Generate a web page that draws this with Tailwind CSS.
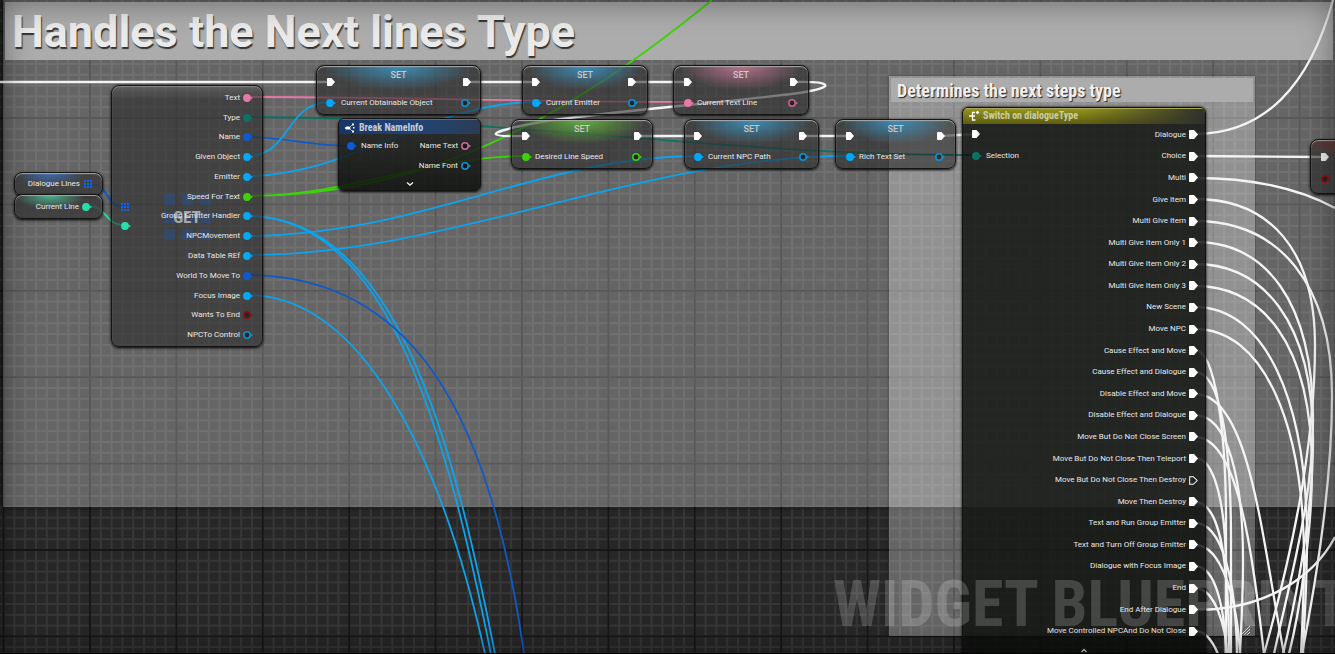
<!DOCTYPE html>
<html lang="en">
<head>
<meta charset="utf-8">
<title>Widget Blueprint</title>
<script src="https://cdn.jsdelivr.net/npm/@tailwindcss/browser@4"></script>
</head>
<body class="bg-[#272727]">
<svg class="hidden" aria-hidden="true">
  <symbol id="exec" viewBox="0 0 8 8"><path d="M0 0.7Q0 0 .7 0H4.500L8 4 4.500 8H.7Q0 8 0 7.3Z" fill="currentColor"/></symbol>
  <symbol id="exec-open" viewBox="0 0 8 8"><path d="M.6.6H3.8L7.3 4 3.8 7.4H.6Z" fill="none" stroke="currentColor" stroke-width=".9"/></symbol>
  <symbol id="pin" viewBox="0 0 10 8"><circle cx="4" cy="4" r="3.9" fill="currentColor"/><path d="M7.6 2.4 10 4 7.6 5.6Z" fill="currentColor"/></symbol>
  <symbol id="pin-open" viewBox="0 0 10 8"><circle cx="4" cy="4" r="3.200" fill="#111" fill-opacity=".6" stroke="currentColor" stroke-width="1.500"/><path d="M7.8 2.4 10 4 7.8 5.6Z" fill="currentColor"/></symbol>
  <symbol id="array" viewBox="0 0 8 8"><path d="M0 0h2v2H0zM3 0h2v2H3zM6 0h2v2H6zM0 3h2v2H0zM3 3h2v2H3zM6 3h2v2H6zM0 6h2v2H0zM3 6h2v2H3zM6 6h2v2H6z" fill="currentColor"/></symbol>
</svg>
<main class="relative h-screen w-full overflow-hidden font-['Roboto',sans-serif] text-[8px] leading-none text-[#e8e8e8]">
  <!-- Grid -->
  <svg class="absolute inset-0 size-full" aria-hidden="true">
    <defs>
      <pattern id="minor" width="10.8" height="10.8" patternUnits="userSpaceOnUse" x="2.6" y="30.6"><path d="M0 1H10.8M1 0V10.8" stroke="#363636" stroke-width="2"/></pattern>
      <pattern id="major" width="86.4" height="86.4" patternUnits="userSpaceOnUse" x="2.6" y="30.6"><path d="M0 1H86.4M1 0V86.4" stroke="#161616" stroke-width="2"/></pattern>
    </defs>
    <rect width="100%" height="100%" fill="url(#minor)"/><rect width="100%" height="100%" fill="url(#major)"/>
  </svg>

  <!-- Comment boxes -->
  <section class="absolute left-[3px] right-0 top-0 h-[507px] bg-white/29 px-0.5 pt-0.5 shadow-[0_0_5px_rgba(0,0,0,0.8)]">
    <h1 class="flex h-[58px] items-center bg-[#acacac] pl-[7px] text-[45px] font-bold text-[#eaeaea] [text-shadow:1px_2px_1px_#333]">Handles the Next lines Type</h1>
  </section>
  <section class="absolute left-[889px] top-[76px] h-[560px] w-[366px] bg-white/29 p-0.5 shadow-[0_0_3px_rgba(0,0,0,0.5)]">
    <h2 class="flex h-6 items-center bg-[#acacac] pl-1.5 pt-0.5 font-['Roboto_Condensed','Roboto',sans-serif] text-[18px] font-bold text-[#f0f0f0] [text-shadow:1px_1px_1px_#222]">Determines the next steps type</h2>
    <svg class="absolute bottom-0 right-1 size-3" viewBox="0 0 12 12" stroke="#ddd" aria-hidden="true"><path d="M2 11 11 2M5 11 11 5M8 11 11 8"/></svg>
  </section>

  <!-- Wires -->
  <svg class="absolute inset-0 size-full" fill="none" aria-hidden="true">
    <g stroke-width="1.8">
      <path stroke="#e878a6" d="M247 97C400 97 540 102 688 102"/>
      <path stroke="#0c7264" d="M247 117C500 117 720 155 976 155"/>
      <path stroke="#0f5ac8" d="M247 137C285 137 310 146 351 146"/>
      <g stroke="#0ca3ee">
        <path d="M247 156C292 156 284 102 331 102M247 176C350 176 430 102 536 102"/>
        <path d="M247 236C420 236 540 156 698 156M247 255C450 255 640 156 850 156"/>
        <path d="M247 216C390 216 448 440 491 654M247 216C396 216 453 440 495 654"/>
        <path d="M247 295C360 295 440 450 485 654"/>
      </g>
      <path stroke="#0f5ac8" d="M247 275C410 275 490 410 524 654"/>
      <path stroke="#3bd307" d="M247 196C350 196 430 156 526 156M247 196C420 196 560 125 712 0"/>
      <path stroke="#0f5ac8" stroke-width="2" d="M90 184C110 184 105 207 124 207"/>
      <path stroke="#26dfaa" d="M88 206C108 206 104 225 125 225"/>
    </g>
    <g stroke="#f4f4f4" stroke-width="2.4">
      <path d="M0 82H331M466 82H536M633 82H688M638 136H698M804 136H850M941 136 976 134"/>
      <path d="M794 82C832 81 835 87 805 92C740 102 590 112 530 124C480 134 490 137 526 136"/>
    </g>
    <g stroke="#f4f4f4" stroke-width="2.3">
      <path d="M1195 134C1265 134 1310 85 1333 0M1195 156 1325 157M1195 178C1250 178 1298 188 1335 208"/>
      <path d="M1195 199C1270 199 1315 250 1315 345C1315 450 1290 560 1264 654"/>
      <path d="M1195 221C1280 221 1332 285 1332 395C1332 480 1318 570 1302 654"/>
      <path d="M1195 242C1265 242 1313 300 1313 420C1313 500 1290 580 1274 654"/>
      <path d="M1195 264C1262 264 1313 320 1313 440C1313 510 1298 590 1283 654"/>
      <path d="M1195 286C1260 286 1312 340 1312 470C1312 530 1300 610 1289 654"/>
      <path d="M1195 307C1265 307 1307 400 1307 540C1307 590 1304 620 1303 654"/>
      <path d="M1195 329C1262 329 1304 420 1304 560C1304 600 1302 630 1301 654"/>
      <path d="M1195 350C1215 350 1226 430 1226 520V654M1195 372C1220 372 1231 440 1231 540V654"/>
      <path d="M1195 394C1250 394 1262 540 1284 654M1195 415C1228 415 1243 480 1243 560C1243 600 1241 630 1240 654"/>
      <path d="M1195 437C1238 437 1252 550 1264 654M1195 458C1216 458 1226 510 1226 570V654"/>
      <path d="M1195 502C1220 502 1229 560 1229 654M1195 523C1222 523 1236 580 1237 654M1195 545C1222 545 1237 600 1240 654M1195 566C1216 566 1225 610 1226 654M1195 588C1216 588 1226 630 1227 654"/>
      <path d="M1195 610C1262 610 1312 580 1335 537M1195 631C1205 631 1213 642 1218 654"/>
    </g>
  </svg>

  <!-- Variable getters -->
  <article class="absolute left-[14px] top-[172px] flex h-[24px] w-[89px] items-center justify-end gap-1 rounded-lg border border-[#141414] bg-[radial-gradient(ellipse_35px_14px_at_40%_0,#3d6bb0,transparent)] bg-[#383838]/80 pr-1.5 shadow-[inset_0_1px_1px_#aaa,0_1px_3px_#000]">
    <span>Dialogue Lines</span><svg class="mr-1 size-2 text-[#0c64f0]" shape-rendering="crispEdges"><use href="#array"/></svg>
  </article>
  <article class="absolute left-[14px] top-[194px] flex h-[25px] w-[89px] items-center justify-end gap-[3px] rounded-lg border border-[#141414] bg-[radial-gradient(ellipse_35px_14px_at_40%_0,#4bb592,transparent)] bg-[#383838]/80 pr-2.5 shadow-[inset_0_1px_1px_#aaa,0_1px_3px_#000]">
    <span>Current Line</span><svg class="h-2 w-2.5 text-[#26dfaa]"><use href="#pin"/></svg>
  </article>

  <!-- Array element getter with split struct outputs -->
  <article class="absolute left-[111px] top-[85px] w-[152px] rounded-lg border border-[#141414] bg-linear-to-b from-[#5a5a5a]/60 via-[#2a2a2a]/60 via-5% to-[#2a2a2a]/60 pt-0.5 pb-px shadow-[inset_0_1px_1px_#888,0_1px_3px_#000]">
    <svg class="absolute left-[52px] top-[108px] h-[46px] w-[47px]" viewBox="0 0 47 46" fill="#2b4d80" fill-opacity=".6" aria-hidden="true"><path d="M0 0h11v11H0zM18 0h11v11H18zM36 0h11v11H36zM0 18h11v11H0zM18 18h11v11H18zM36 18h11v11H36zM0 35h11v11H0zM18 35h11v11H18zM36 35h11v11H36z"/></svg>
    <h3 class="absolute inset-x-0 top-[123px] text-center font-['Roboto_Condensed','Roboto',sans-serif] text-[17px] font-bold text-[#a6a6a6]">GET</h3>
    <svg class="absolute left-[9px] top-[117px] size-2 text-[#0c64f0]" shape-rendering="crispEdges"><use href="#array"/></svg>
    <svg class="absolute left-[9px] top-[136px] h-2 w-2.5 text-[#26dfaa]"><use href="#pin"/></svg>
    <ul class="relative grid h-[257px] auto-rows-fr pr-[9px] [&>li]:flex [&>li]:items-center [&>li]:justify-end [&>li]:gap-[3px] [&_svg]:h-2 [&_svg]:w-2.5">
      <li>Text<svg class="text-[#e878a6]"><use href="#pin"/></svg></li>
      <li>Type<svg class="text-[#0c7264]"><use href="#pin"/></svg></li>
      <li>Name<svg class="text-[#0c5ad6]"><use href="#pin"/></svg></li>
      <li>Given Object<svg class="text-[#04a8f8]"><use href="#pin"/></svg></li>
      <li>Emitter<svg class="text-[#04a8f8]"><use href="#pin"/></svg></li>
      <li>Speed For Text<svg class="text-[#3bd307]"><use href="#pin"/></svg></li>
      <li>Group Emitter Handler<svg class="text-[#04a8f8]"><use href="#pin"/></svg></li>
      <li>NPCMovement<svg class="text-[#04a8f8]"><use href="#pin"/></svg></li>
      <li>Data Table REf<svg class="text-[#04a8f8]"><use href="#pin"/></svg></li>
      <li>World To Move To<svg class="text-[#0c5ad6]"><use href="#pin"/></svg></li>
      <li>Focus Image<svg class="text-[#04a8f8]"><use href="#pin"/></svg></li>
      <li>Wants To End<svg class="text-[#8b0f12]"><use href="#pin-open"/></svg></li>
      <li>NPCTo Control<svg class="text-[#0c93d6]"><use href="#pin-open"/></svg></li>
    </ul>
  </article>

  <!-- Setter nodes -->
  <article class="absolute left-[316px] top-[65px] h-[50px] w-[165px] rounded-lg border border-[#141414] bg-[radial-gradient(ellipse_75px_24px_at_50%_0,#3b8db8,transparent)] bg-[#2a2a2a]/60 px-[9px] pt-[5px] shadow-[inset_0_1px_1px_#aaa,0_1px_3px_#000]">
    <h3 class="text-center text-[9px] font-medium text-[#c8c8c8]">SET</h3>
    <div class="-mt-0.5 flex justify-between pl-px text-white"><svg class="size-2"><use href="#exec"/></svg><svg class="size-2"><use href="#exec"/></svg></div>
    <div class="mt-[13px] flex items-center gap-[5px] text-[#04a8f8]"><svg class="h-2 w-2.5"><use href="#pin"/></svg><span class="grow text-[#e8e8e8]">Current Obtainable Object</span><svg class="h-2 w-2.5 text-[#0c93d6]"><use href="#pin-open"/></svg></div>
  </article>
  <article class="absolute left-[522px] top-[65px] h-[50px] w-[126px] rounded-lg border border-[#141414] bg-[radial-gradient(ellipse_58px_24px_at_50%_0,#3b8db8,transparent)] bg-[#2a2a2a]/60 px-[9px] pt-[5px] shadow-[inset_0_1px_1px_#aaa,0_1px_3px_#000]">
    <h3 class="text-center text-[9px] font-medium text-[#c8c8c8]">SET</h3>
    <div class="-mt-0.5 flex justify-between pr-0.5 text-white"><svg class="size-2"><use href="#exec"/></svg><svg class="size-2"><use href="#exec"/></svg></div>
    <div class="mt-[13px] flex items-center gap-1 text-[#04a8f8]"><svg class="h-2 w-2.5"><use href="#pin"/></svg><span class="grow text-[#e8e8e8]">Current Emitter</span><svg class="h-2 w-2.5 text-[#0c93d6]"><use href="#pin-open"/></svg></div>
  </article>
  <article class="absolute left-[673px] top-[65px] h-[50px] w-[136px] rounded-lg border border-[#141414] bg-[radial-gradient(ellipse_62px_24px_at_50%_0,#b8708c,transparent)] bg-[#2a2a2a]/60 px-2.5 pt-[5px] shadow-[inset_0_1px_1px_#aaa,0_1px_3px_#000]">
    <h3 class="text-center text-[9px] font-medium text-[#c8c8c8]">SET</h3>
    <div class="-mt-0.5 flex justify-between text-white"><svg class="size-2"><use href="#exec"/></svg><svg class="size-2"><use href="#exec"/></svg></div>
    <div class="mt-[13px] flex items-center gap-[3px] text-[#e878a6]"><svg class="h-2 w-2.5"><use href="#pin"/></svg><span class="grow text-[#e8e8e8]">Current Text Line</span><svg class="h-2 w-2.5 text-[#c9668f]"><use href="#pin-open"/></svg></div>
  </article>
  <article class="absolute left-[511px] top-[119px] h-[50px] w-[142px] rounded-lg border border-[#141414] bg-[radial-gradient(ellipse_64px_24px_at_50%_0,#5faf3a,transparent)] bg-[#2a2a2a]/60 px-2.5 pt-[5px] shadow-[inset_0_1px_1px_#aaa,0_1px_3px_#000]">
    <h3 class="text-center text-[9px] font-medium text-[#c8c8c8]">SET</h3>
    <div class="-mt-0.5 flex justify-between text-white"><svg class="size-2"><use href="#exec"/></svg><svg class="size-2"><use href="#exec"/></svg></div>
    <div class="mt-[13px] flex items-center gap-[3px] text-[#3bd307]"><svg class="h-2 w-2.5"><use href="#pin"/></svg><span class="grow text-[#e8e8e8]">Desired Line Speed</span><svg class="h-2 w-2.5"><use href="#pin-open"/></svg></div>
  </article>
  <article class="absolute left-[684px] top-[119px] h-[50px] w-[135px] rounded-lg border border-[#141414] bg-[radial-gradient(ellipse_62px_24px_at_50%_0,#3b8db8,transparent)] bg-[#2a2a2a]/60 px-[9px] pt-[5px] shadow-[inset_0_1px_1px_#aaa,0_1px_3px_#000]">
    <h3 class="text-center text-[9px] font-medium text-[#c8c8c8]">SET</h3>
    <div class="-mt-0.5 flex justify-between pr-0.5 text-white"><svg class="size-2"><use href="#exec"/></svg><svg class="size-2"><use href="#exec"/></svg></div>
    <div class="mt-[13px] flex items-center gap-1 text-[#04a8f8]"><svg class="h-2 w-2.5"><use href="#pin"/></svg><span class="grow text-[#e8e8e8]">Current NPC Path</span><svg class="h-2 w-2.5 text-[#0c93d6]"><use href="#pin-open"/></svg></div>
  </article>
  <article class="absolute left-[835px] top-[119px] h-[50px] w-[121px] rounded-lg border border-[#141414] bg-[radial-gradient(ellipse_56px_24px_at_50%_0,#3b8db8,transparent)] bg-[#2a2a2a]/60 px-2.5 pt-[5px] shadow-[inset_0_1px_1px_#aaa,0_1px_3px_#000]">
    <h3 class="text-center text-[9px] font-medium text-[#c8c8c8]">SET</h3>
    <div class="-mt-0.5 flex justify-between text-white"><svg class="size-2"><use href="#exec"/></svg><svg class="size-2"><use href="#exec"/></svg></div>
    <div class="mt-[13px] flex items-center gap-[3px] text-[#04a8f8]"><svg class="h-2 w-2.5"><use href="#pin"/></svg><span class="grow text-[#e8e8e8]">Rich Text Set</span><svg class="h-2 w-2.5 text-[#0c93d6]"><use href="#pin-open"/></svg></div>
  </article>

  <!-- Break struct node -->
  <article class="absolute left-[338px] top-[118px] h-[73px] w-[143px] overflow-hidden rounded-md border border-[#111] bg-linear-to-b from-[#232523]/84 to-[#0a0c0a]/84 shadow-[0_1px_3px_#000]">
    <h3 class="flex h-[15px] items-center gap-1 bg-linear-to-r from-[#173566] via-[#1f4479] to-[#2b3c55] pl-1.5 pt-0.5 font-['Roboto_Condensed','Roboto',sans-serif] text-[10px] font-bold text-[#c8ccd4] shadow-[inset_0_1px_0_#667]">
      <svg class="h-2.5 w-[10px]" viewBox="0 0 10 10" aria-hidden="true"><path d="M0 5Q0 3.5 2 3.5H4Q5.5 3.5 5.5 5T4 6.500H2Q0 6.500 0 5Z" fill="#fff"/><path d="M5 4 7 2M5 6 7 8" stroke="#fff" stroke-width=".6"/><path d="M7 .5h2v2H7zM7 7.500h2v2H7zM8 4h1.500v1.500H8z" fill="#fff"/></svg>
      Break NameInfo</h3>
    <div class="mt-2 grid grid-cols-2 gap-y-3 pl-2 pr-[9px]">
      <span class="flex items-center gap-1"><svg class="h-2 w-2.5 text-[#0c5ad6]"><use href="#pin"/></svg>Name Info</span>
      <span class="flex items-center justify-end gap-[3px]">Name Text<svg class="h-2 w-2.5 text-[#d06b98]"><use href="#pin-open"/></svg></span>
      <span class="col-start-2 flex items-center justify-end gap-[3px]">Name Font<svg class="h-2 w-2.5 text-[#0c93d6]"><use href="#pin-open"/></svg></span>
    </div>
    <button class="mx-auto mt-2.5 block h-2 w-2" aria-label="Show advanced"><svg class="size-2" viewBox="0 0 8 8"><path d="M1 2.500 4 5 7 2.500" fill="none" stroke="#eee" stroke-width="1.400"/></svg></button>
  </article>

  <!-- Switch node -->
  <article class="absolute left-[962px] top-[107px] h-[560px] w-[244px] overflow-hidden rounded-md border border-[#111] bg-[#0b0d0b]/82 shadow-[0_0_3px_#000]">
    <h3 class="flex h-4 items-center gap-1 bg-[linear-gradient(90deg,transparent_50%,#2f302c_100%),linear-gradient(#98981c,#5d5d10)] pl-1.5 font-['Roboto_Condensed','Roboto',sans-serif] text-[10px] font-bold text-[#cccca8] shadow-[inset_0_1px_0_#aaa95a]">
      <svg class="h-2.5 w-[10px]" viewBox="0 0 10 10" fill="none" stroke="#fff" stroke-width="1.300" aria-hidden="true"><path d="M0 5H6M6 1.500H3.500V9H6.500M8.500 0V3M7 1.500h3"/></svg>
      Switch on dialogueType</h3>
    <div class="flex">
      <div class="mt-1.5 flex shrink-0 flex-col gap-3.5 pl-[9px]">
        <svg class="size-2 text-white"><use href="#exec"/></svg>
        <span class="flex items-center gap-1"><svg class="h-2 w-2.5 text-[#0c7264]"><use href="#pin"/></svg>Selection</span>
      </div>
      <ul class="grid h-[518px] grow auto-rows-fr pr-[7px] [&>li]:flex [&>li]:items-center [&>li]:justify-end [&>li]:gap-[3px] [&>li]:whitespace-nowrap [&_svg]:size-[9px] [&_svg]:text-white">
        <li>Dialogue<svg><use href="#exec"/></svg></li>
        <li>Choice<svg><use href="#exec"/></svg></li>
        <li>Multi<svg><use href="#exec"/></svg></li>
        <li>Give Item<svg><use href="#exec"/></svg></li>
        <li>Multi Give Item<svg><use href="#exec"/></svg></li>
        <li>Multi Give Item Only 1<svg><use href="#exec"/></svg></li>
        <li>Multi Give Item Only 2<svg><use href="#exec"/></svg></li>
        <li>Multi Give Item Only 3<svg><use href="#exec"/></svg></li>
        <li>New Scene<svg><use href="#exec"/></svg></li>
        <li>Move NPC<svg><use href="#exec"/></svg></li>
        <li>Cause Effect and Move<svg><use href="#exec"/></svg></li>
        <li>Cause Effect and Dialogue<svg><use href="#exec"/></svg></li>
        <li>Disable Effect and Move<svg><use href="#exec"/></svg></li>
        <li>Disable Effect and Dialogue<svg><use href="#exec"/></svg></li>
        <li>Move But Do Not Close Screen<svg><use href="#exec"/></svg></li>
        <li>Move But Do Not Close Then Teleport<svg><use href="#exec"/></svg></li>
        <li>Move But Do Not Close Then Destroy<svg><use href="#exec-open"/></svg></li>
        <li>Move Then Destroy<svg><use href="#exec"/></svg></li>
        <li>Text and Run Group Emitter<svg><use href="#exec"/></svg></li>
        <li>Text and Turn Off Group Emitter<svg><use href="#exec"/></svg></li>
        <li>Dialogue with Focus Image<svg><use href="#exec"/></svg></li>
        <li>End<svg><use href="#exec"/></svg></li>
        <li>End After Dialogue<svg><use href="#exec"/></svg></li>
        <li>Move Controlled NPCAnd Do Not Close<svg><use href="#exec"/></svg></li>
      </ul>
    </div>
    <button class="mx-auto mt-1 block h-2 w-2" aria-label="Hide advanced"><svg class="size-2" viewBox="0 0 8 8"><path d="M1.500 6 4 3.500 6.500 6" fill="none" stroke="#ccc" stroke-width="1.400"/></svg></button>
  </article>

  <!-- Node continuing past the right edge -->
  <article class="absolute left-[1310px] top-[139px] flex h-[55px] w-[120px] flex-col gap-3.5 rounded-lg border border-[#141414] bg-[radial-gradient(ellipse_80px_18px_at_50%_0,#803030,transparent)] bg-[#2a2a2a]/60 pl-2.5 pt-[13px] shadow-[inset_0_1px_1px_#aaa,0_1px_3px_#000]">
    <svg class="size-2 text-[#eee]"><use href="#exec"/></svg>
    <svg class="h-2 w-2.5 text-[#9b0f12]"><use href="#pin-open"/></svg>
  </article>

  <p class="pointer-events-none absolute left-[833px] top-[573px] whitespace-nowrap font-['Roboto_Condensed','Roboto',sans-serif] text-[64px] font-bold text-white/18">WIDGET BLUEPRINT</p>
  <div class="pointer-events-none absolute inset-0 border-b border-black shadow-[inset_0_0_32px_rgba(0,0,0,0.45)]"></div>
</main>
</body>
</html>
